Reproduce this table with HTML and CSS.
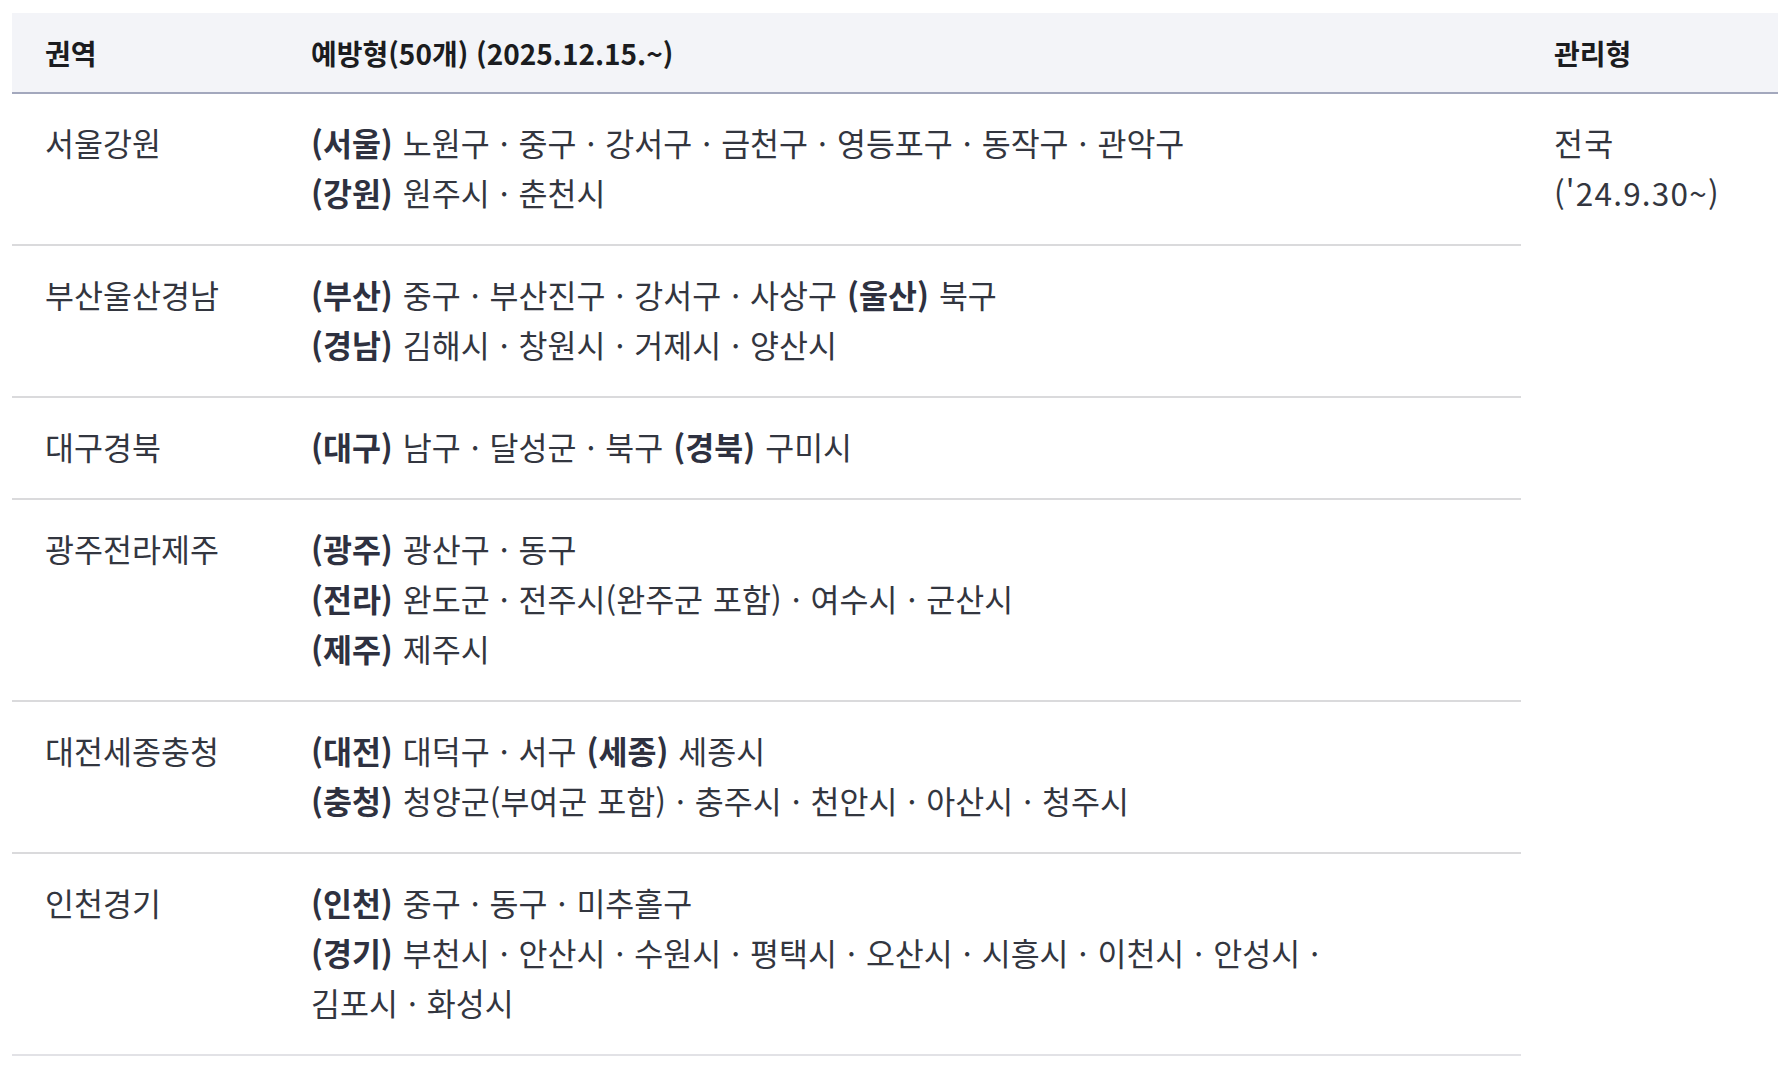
FILE: index.html
```html
<!DOCTYPE html>
<html lang="ko">
<head>
<meta charset="utf-8">
<link rel="stylesheet" href="styles.css">
</head>
<body>
<div class="wrap">
<table class="region-table">
  <colgroup>
    <col class="c1">
    <col class="c2">
    <col class="c3">
  </colgroup>
  <thead>
    <tr>
      <th>권역</th>
      <th>예방형(50개) (2025.12.15.~)</th>
      <th>관리형</th>
    </tr>
  </thead>
  <tbody>
    <tr>
      <td>서울강원</td>
      <td><b>(서울)</b> 노원구 · 중구 · 강서구 · 금천구 · 영등포구 · 동작구 · 관악구<br><b>(강원)</b> 원주시 · 춘천시</td>
      <td class="all" rowspan="6">전국<br>('24.9.30~)</td>
    </tr>
    <tr>
      <td>부산울산경남</td>
      <td><b>(부산)</b> 중구 · 부산진구 · 강서구 · 사상구 <b>(울산)</b> 북구<br><b>(경남)</b> 김해시 · 창원시 · 거제시 · 양산시</td>
    </tr>
    <tr>
      <td>대구경북</td>
      <td><b>(대구)</b> 남구 · 달성군 · 북구 <b>(경북)</b> 구미시</td>
    </tr>
    <tr>
      <td>광주전라제주</td>
      <td><b>(광주)</b> 광산구 · 동구<br><b>(전라)</b> 완도군 · 전주시(완주군 포함) · 여수시 · 군산시<br><b>(제주)</b> 제주시</td>
    </tr>
    <tr>
      <td>대전세종충청</td>
      <td><b>(대전)</b> 대덕구 · 서구 <b>(세종)</b> 세종시<br><b>(충청)</b> 청양군(부여군 포함) · 충주시 · 천안시 · 아산시 · 청주시</td>
    </tr>
    <tr class="last">
      <td>인천경기</td>
      <td class="wide"><b>(인천)</b> 중구 · 동구 · 미추홀구<br><b>(경기)</b> 부천시 · 안산시 · 수원시 · 평택시 · 오산시 · 시흥시 · 이천시 · 안성시 · 김포시 · 화성시</td>
    </tr>
  </tbody>
</table>
</div>
</body>
</html>
```

FILE: styles.css
```css
html, body {
  margin: 0;
  padding: 0;
  background: #ffffff;
}

.wrap {
  padding: 13px 0 0 12px;
}

.region-table {
  width: 1766px;
  border-collapse: collapse;
  table-layout: fixed;
  font-family: "Noto Sans CJK KR", "Noto Sans", sans-serif;
  color: #33363f;
}

.c1 { width: 266px; }
.c2 { width: 1243px; }
.c3 { width: 257px; }

.region-table th {
  height: 79px;
  padding: 0 0 0 33px;
  background: #f3f4f8;
  border-bottom: 2px solid #a3a8bd;
  text-align: left;
  vertical-align: middle;
  font-size: 28px;
  font-weight: 700;
  color: #1b1c20;
  line-height: 40px;
}

.region-table td {
  padding: 23px 20px 27px 33px;
  vertical-align: top;
  font-size: 31.5px;
  line-height: 50px;
  border-bottom: 2px solid #dadadc;
  word-break: keep-all;
  word-spacing: 1.2px;
}

.region-table td b {
  font-weight: 700;
  color: #2e3140;
}

.region-table td.all {
  border-bottom: none;
  white-space: nowrap;
  letter-spacing: 1.2px;
}

.region-table td.wide {
  padding-right: 140px;
}

.region-table tr.last td {
  border-bottom-color: #e2e2e6;
}
```
